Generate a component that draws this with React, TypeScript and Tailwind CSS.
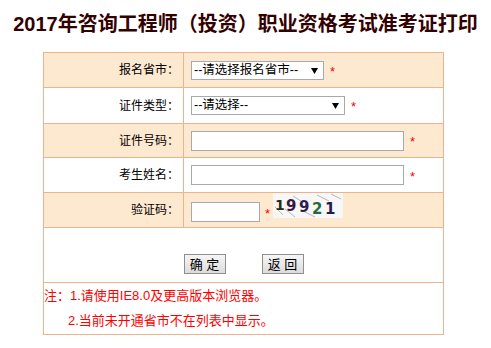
import React from "react";

const cjk = "font-['Liberation_Sans','Noto_Sans_CJK_SC',sans-serif]";

const Star = () => <span className="ml-[6px] mt-[3px] text-[13px] text-[#ff0000]">*</span>;

const FakeSelect = ({ text, width }: { text: string; width: string }) => (
  <div
    className={`relative flex h-[19px] items-center border border-[#a9a9a9] bg-white pl-[2px] text-[12.5px] text-black ${width}`}
  >
    <span>{text}</span>
    <svg className="absolute right-[5px] top-[6px]" width="7" height="6" viewBox="0 0 7 6">
      <path d="M0 0 H7 L3.5 6 Z" fill="#000" />
    </svg>
  </div>
);

const Captcha = () => (
  <svg width="70" height="25" viewBox="0 0 70 25" className="mt-[-10px]">
    <rect width="70" height="25" fill="#f7f7f7" />
    <path d="M2 14 L10 22 M12 16 L22 24 M30 18 L42 24 M44 2 L56 8 M58 1 L68 6 M20 3 L28 8" stroke="#b8b8b8" strokeWidth="1" fill="none" />
    <text x="2" y="17" fontFamily="'DejaVu Sans', sans-serif" fontSize="14" fontWeight="bold" fill="#2e2a10">1</text>
    <text x="13" y="18" fontFamily="'DejaVu Sans', sans-serif" fontSize="15" fontWeight="bold" fill="#3a1840">9</text>
    <text x="26" y="19" fontFamily="'DejaVu Sans', sans-serif" fontSize="15" fontWeight="bold" fill="#2a2050">9</text>
    <text x="39" y="21" fontFamily="'DejaVu Sans', sans-serif" fontSize="15" fontWeight="bold" fill="#2a6a3a">2</text>
    <text x="52" y="21" fontFamily="'DejaVu Sans', sans-serif" fontSize="15" fontWeight="bold" fill="#241a48">1</text>
  </svg>
);

const rows = [
  { label: "报名省市：", bg: "bg-[#fde9d0]", h: "h-[35px]" },
  { label: "证件类型：", bg: "bg-white", h: "h-[36px]" },
  { label: "证件号码：", bg: "bg-[#fde9d0]", h: "h-[34px]" },
  { label: "考生姓名：", bg: "bg-white", h: "h-[35px]" },
  { label: "验证码：", bg: "bg-[#fde9d0]", h: "h-[35px]" },
];

export default function App() {
  const fields = [
    <>
      <FakeSelect text="--请选择报名省市--" width="w-[133px]" />
      <Star />
    </>,
    <>
      <FakeSelect text="--请选择--" width="w-[154px]" />
      <Star />
    </>,
    <>
      <input className="h-[20px] w-[213px] border border-[#a9a9a9] bg-white" />
      <Star />
    </>,
    <>
      <input className="h-[20px] w-[213px] border border-[#a9a9a9] bg-white" />
      <Star />
    </>,
    <>
      <input className="mt-[3px] h-[20px] w-[69px] border border-[#a9a9a9] bg-white" />
      <span className="ml-[5px] mr-[3px] mt-[8px] text-[13px] text-[#ff0000]">*</span>
      <Captcha />
    </>,
  ];

  return (
    <div className={`w-[491px] h-[348px] bg-white ${cjk}`}>
      <h1 className="pt-[10px] text-center text-[20px] font-bold leading-[28px] text-[#330000]">
        2017年咨询工程师（投资）职业资格考试准考证打印
      </h1>
      <div className="ml-[43px] mt-[14px] w-[401px] border border-[#efb38b]">
        {rows.map((r, i) => (
          <div key={i} className={`flex ${r.h} ${r.bg} border-b border-[#efb38b]`}>
            <div className="flex w-[140px] items-center justify-end border-r border-[#efb38b] pr-[4px] text-[12px] text-black">
              {r.label}
            </div>
            <div className="flex flex-1 items-center pl-[7px]">{fields[i]}</div>
          </div>
        ))}
        <div className="flex h-[55px] items-start justify-center gap-[36px] border-b border-[#efb38b] pt-[26px]">
          <button className="h-[20px] w-[42px] border border-[#8f8f8f] bg-gradient-to-b from-[#f6f6f6] to-[#dcdcdc] text-[13px] leading-none text-black">
            确 定
          </button>
          <button className="h-[20px] w-[42px] border border-[#8f8f8f] bg-gradient-to-b from-[#f6f6f6] to-[#dcdcdc] text-[13px] leading-none text-black">
            返 回
          </button>
        </div>
        <div className="h-[51px] text-[13px] leading-[25px] text-[#ff0000]">
          <div>注：1.请使用IE8.0及更高版本浏览器。</div>
          <div className="pl-[24px]">2.当前未开通省市不在列表中显示。</div>
        </div>
      </div>
    </div>
  );
}
